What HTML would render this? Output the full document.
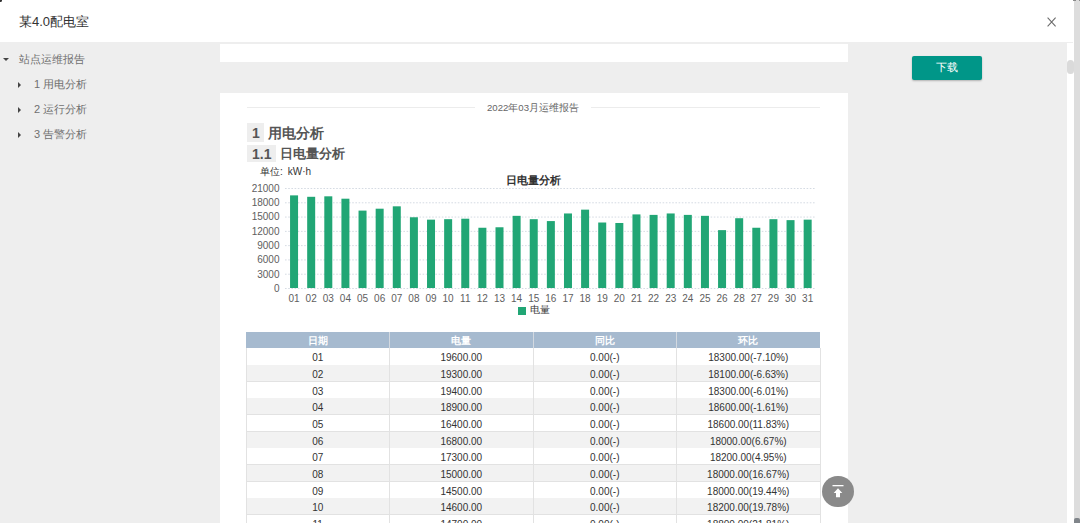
<!DOCTYPE html>
<html><head><meta charset="utf-8">
<style>
*{margin:0;padding:0;box-sizing:border-box}
html,body{width:1080px;height:523px;overflow:hidden;background:#fff;font-family:"Liberation Sans",sans-serif;color:#333}
.abs{position:absolute}
#hdr{left:0;top:0;width:1073px;height:43px;background:#fff;border-bottom:1px solid #eee}
#title{left:19px;top:13px;font-size:13px;line-height:17px;color:#333;white-space:nowrap}
#side{left:0;top:43px;width:220px;height:480px;background:#eee}
.si{font-size:11px;line-height:14px;color:#707070;white-space:nowrap}
.caret-d{width:0;height:0;border-left:3px solid transparent;border-right:3px solid transparent;border-top:3px solid #444}
.caret-r{width:0;height:0;border-top:3px solid transparent;border-bottom:3px solid transparent;border-left:3px solid #444}
#main{left:220px;top:43px;width:628px;height:480px;background:#eee}
#rightbg{left:848px;top:43px;width:219px;height:480px;background:#eee}
#track{left:1067px;top:43px;width:7px;height:480px;background:#fff}
#thumb{left:1067px;top:60px;width:7px;height:13.6px;background:#dadada;border-radius:3.5px}
#ostrip{left:1074px;top:0;width:6px;height:523px;background:#dddddd}
#btn{left:912px;top:56px;width:70px;height:24px;background:#009688;border-radius:2px;box-shadow:0 1px 2px rgba(0,0,0,.25);color:#fff;font-size:10.5px;line-height:22px;text-align:center}
.panel{background:#fff}
.hbox{background:#eee}
.h1{font-size:14px;line-height:18px;font-weight:bold;color:#555;white-space:nowrap}
.ax{font-family:"Liberation Sans",sans-serif;font-size:10px;fill:#606060}
.thx{color:#fff;font-weight:bold;font-size:9.5px;line-height:18px;text-align:center}
.tdx{color:#333;font-size:10px;line-height:20px;text-align:center;white-space:nowrap}
</style></head>
<body>
<div id="hdr" class="abs"></div>
<div id="title" class="abs">某4.0配电室</div>
<svg class="abs" style="left:1046px;top:16px" width="12" height="12" viewBox="0 0 12 12"><path d="M1.6 1.6L9.6 10.4M9.6 1.6L1.6 10.4" stroke="#6a6a6a" stroke-width="1.05"/></svg>

<div id="side" class="abs"></div>
<div class="abs caret-d" style="left:2.5px;top:57.5px"></div>
<div class="abs si" style="left:19px;top:52px">站点运维报告</div>
<div class="abs caret-r" style="left:18px;top:81.5px"></div>
<div class="abs si" style="left:34px;top:77px">1 用电分析</div>
<div class="abs caret-r" style="left:18px;top:106.5px"></div>
<div class="abs si" style="left:34px;top:102px">2 运行分析</div>
<div class="abs caret-r" style="left:18px;top:131.5px"></div>
<div class="abs si" style="left:34px;top:127px">3 告警分析</div>

<div id="main" class="abs"></div>
<div class="abs panel" style="left:220px;top:44px;width:627.5px;height:17.5px"></div>
<div class="abs panel" style="left:220px;top:93px;width:627.5px;height:430px"></div>

<div id="rightbg" class="abs"></div>
<div id="btn" class="abs">下载</div>
<div id="track" class="abs"></div>
<div id="thumb" class="abs"></div>
<div id="ostrip" class="abs"></div>
<div class="abs" style="left:1074px;top:518px;width:6px;height:5px;background:#80858a;border-radius:2px 2px 0 0"></div>
<div class="abs" style="left:1073px;top:0;width:3px;height:1px;background:#8a8a8a"></div>
<div class="abs" style="left:1078.5px;top:0;width:1.5px;height:1px;background:#8a8a8a"></div>
<div class="abs" style="left:-1px;top:-1px;width:3px;height:3px;border-radius:50%;background:#333"></div>

<div class="abs" style="left:247px;top:107px;width:228px;height:1px;background:#ececec"></div>
<div class="abs" style="left:591px;top:107px;width:229px;height:1px;background:#ececec"></div>
<div class="abs" style="left:475px;top:101px;width:116px;text-align:center;font-size:9.6px;line-height:13px;color:#666">2022年03月运维报告</div>

<div class="abs hbox" style="left:247px;top:123px;width:17px;height:19px"></div>
<div class="abs h1" style="left:252px;top:124px">1</div>
<div class="abs h1" style="left:268px;top:124px">用电分析</div>
<div class="abs hbox" style="left:247px;top:145px;width:29px;height:17px"></div>
<div class="abs h1" style="left:252px;top:145px">1.1</div>
<div class="abs h1" style="left:280px;top:145px;font-size:13.2px">日电量分析</div>
<div class="abs" style="left:260px;top:164.5px;font-size:10px;line-height:13px;color:#333;white-space:nowrap">单位:<span style="margin-left:5px">kW·h</span></div>
<div class="abs" style="left:473px;top:173px;width:121px;text-align:center;font-size:11px;line-height:14px;font-weight:bold;color:#333">日电量分析</div>
<svg class="abs" style="left:0;top:0" width="1080" height="523" viewBox="0 0 1080 523">
<line x1="285" y1="288.50" x2="815" y2="288.50" stroke="#d5dbe3" stroke-width="1" stroke-dasharray="1.6,1.6"/>
<line x1="285" y1="274.21" x2="815" y2="274.21" stroke="#d5dbe3" stroke-width="1" stroke-dasharray="1.6,1.6"/>
<line x1="285" y1="259.93" x2="815" y2="259.93" stroke="#d5dbe3" stroke-width="1" stroke-dasharray="1.6,1.6"/>
<line x1="285" y1="245.64" x2="815" y2="245.64" stroke="#d5dbe3" stroke-width="1" stroke-dasharray="1.6,1.6"/>
<line x1="285" y1="231.36" x2="815" y2="231.36" stroke="#d5dbe3" stroke-width="1" stroke-dasharray="1.6,1.6"/>
<line x1="285" y1="217.07" x2="815" y2="217.07" stroke="#d5dbe3" stroke-width="1" stroke-dasharray="1.6,1.6"/>
<line x1="285" y1="202.79" x2="815" y2="202.79" stroke="#d5dbe3" stroke-width="1" stroke-dasharray="1.6,1.6"/>
<line x1="285" y1="188.50" x2="815" y2="188.50" stroke="#d5dbe3" stroke-width="1" stroke-dasharray="1.6,1.6"/>
<text x="279.5" y="291.90" text-anchor="end" class="ax">0</text>
<text x="279.5" y="277.61" text-anchor="end" class="ax">3000</text>
<text x="279.5" y="263.33" text-anchor="end" class="ax">6000</text>
<text x="279.5" y="249.04" text-anchor="end" class="ax">9000</text>
<text x="279.5" y="234.76" text-anchor="end" class="ax">12000</text>
<text x="279.5" y="220.47" text-anchor="end" class="ax">15000</text>
<text x="279.5" y="206.19" text-anchor="end" class="ax">18000</text>
<text x="279.5" y="191.90" text-anchor="end" class="ax">21000</text>
<rect x="290.06" y="195.37" width="8" height="92.63" fill="#21a675"/>
<text x="294.06" y="302" text-anchor="middle" class="ax">01</text>
<rect x="307.18" y="196.80" width="8" height="91.20" fill="#21a675"/>
<text x="311.18" y="302" text-anchor="middle" class="ax">02</text>
<rect x="324.30" y="196.32" width="8" height="91.68" fill="#21a675"/>
<text x="328.30" y="302" text-anchor="middle" class="ax">03</text>
<rect x="341.42" y="198.70" width="8" height="89.30" fill="#21a675"/>
<text x="345.42" y="302" text-anchor="middle" class="ax">04</text>
<rect x="358.54" y="210.60" width="8" height="77.40" fill="#21a675"/>
<text x="362.54" y="302" text-anchor="middle" class="ax">05</text>
<rect x="375.66" y="208.70" width="8" height="79.30" fill="#21a675"/>
<text x="379.66" y="302" text-anchor="middle" class="ax">06</text>
<rect x="392.78" y="206.32" width="8" height="81.68" fill="#21a675"/>
<text x="396.78" y="302" text-anchor="middle" class="ax">07</text>
<rect x="409.90" y="217.27" width="8" height="70.73" fill="#21a675"/>
<text x="413.90" y="302" text-anchor="middle" class="ax">08</text>
<rect x="427.02" y="219.65" width="8" height="68.35" fill="#21a675"/>
<text x="431.02" y="302" text-anchor="middle" class="ax">09</text>
<rect x="444.14" y="219.18" width="8" height="68.82" fill="#21a675"/>
<text x="448.14" y="302" text-anchor="middle" class="ax">10</text>
<rect x="461.26" y="218.70" width="8" height="69.30" fill="#21a675"/>
<text x="465.26" y="302" text-anchor="middle" class="ax">11</text>
<rect x="478.38" y="227.75" width="8" height="60.25" fill="#21a675"/>
<text x="482.38" y="302" text-anchor="middle" class="ax">12</text>
<rect x="495.50" y="227.27" width="8" height="60.73" fill="#21a675"/>
<text x="499.50" y="302" text-anchor="middle" class="ax">13</text>
<rect x="512.62" y="215.84" width="8" height="72.16" fill="#21a675"/>
<text x="516.62" y="302" text-anchor="middle" class="ax">14</text>
<rect x="529.74" y="219.18" width="8" height="68.82" fill="#21a675"/>
<text x="533.74" y="302" text-anchor="middle" class="ax">15</text>
<rect x="546.86" y="221.08" width="8" height="66.92" fill="#21a675"/>
<text x="550.86" y="302" text-anchor="middle" class="ax">16</text>
<rect x="563.98" y="213.46" width="8" height="74.54" fill="#21a675"/>
<text x="567.98" y="302" text-anchor="middle" class="ax">17</text>
<rect x="581.10" y="209.65" width="8" height="78.35" fill="#21a675"/>
<text x="585.10" y="302" text-anchor="middle" class="ax">18</text>
<rect x="598.22" y="222.51" width="8" height="65.49" fill="#21a675"/>
<text x="602.22" y="302" text-anchor="middle" class="ax">19</text>
<rect x="615.34" y="222.99" width="8" height="65.01" fill="#21a675"/>
<text x="619.34" y="302" text-anchor="middle" class="ax">20</text>
<rect x="632.46" y="214.41" width="8" height="73.59" fill="#21a675"/>
<text x="636.46" y="302" text-anchor="middle" class="ax">21</text>
<rect x="649.58" y="214.89" width="8" height="73.11" fill="#21a675"/>
<text x="653.58" y="302" text-anchor="middle" class="ax">22</text>
<rect x="666.70" y="213.46" width="8" height="74.54" fill="#21a675"/>
<text x="670.70" y="302" text-anchor="middle" class="ax">23</text>
<rect x="683.82" y="214.89" width="8" height="73.11" fill="#21a675"/>
<text x="687.82" y="302" text-anchor="middle" class="ax">24</text>
<rect x="700.94" y="215.84" width="8" height="72.16" fill="#21a675"/>
<text x="704.94" y="302" text-anchor="middle" class="ax">25</text>
<rect x="718.06" y="230.13" width="8" height="57.87" fill="#21a675"/>
<text x="722.06" y="302" text-anchor="middle" class="ax">26</text>
<rect x="735.18" y="218.22" width="8" height="69.78" fill="#21a675"/>
<text x="739.18" y="302" text-anchor="middle" class="ax">28</text>
<rect x="752.30" y="227.75" width="8" height="60.25" fill="#21a675"/>
<text x="756.30" y="302" text-anchor="middle" class="ax">27</text>
<rect x="769.42" y="219.18" width="8" height="68.82" fill="#21a675"/>
<text x="773.42" y="302" text-anchor="middle" class="ax">29</text>
<rect x="786.54" y="220.13" width="8" height="67.87" fill="#21a675"/>
<text x="790.54" y="302" text-anchor="middle" class="ax">30</text>
<rect x="803.66" y="219.65" width="8" height="68.35" fill="#21a675"/>
<text x="807.66" y="302" text-anchor="middle" class="ax">31</text>
</svg>
<div class="abs" style="left:518px;top:307px;width:8px;height:8px;background:#21a675"></div>
<div class="abs" style="left:530px;top:303px;font-size:10px;line-height:13px;color:#333;white-space:nowrap">电量</div>
<div class="abs" style="left:246px;top:332px;width:574px;height:16.4px;background:#a6bacf"></div>
<div class="abs thx" style="left:246px;top:332px;width:143.5px;height:16.4px">日期</div>
<div class="abs thx" style="left:389.5px;top:332px;width:143.5px;height:16.4px">电量</div>
<div class="abs thx" style="left:533px;top:332px;width:143.5px;height:16.4px">同比</div>
<div class="abs thx" style="left:676.5px;top:332px;width:143.5px;height:16.4px">环比</div>
<div class="abs" style="left:389.0px;top:332px;width:1px;height:16.4px;background:#d3d9e0"></div>
<div class="abs" style="left:532.5px;top:332px;width:1px;height:16.4px;background:#d3d9e0"></div>
<div class="abs" style="left:676.0px;top:332px;width:1px;height:16.4px;background:#d3d9e0"></div>
<div class="abs" style="left:246px;top:348.40px;width:574px;height:16.64px;background:#fff"></div>
<div class="abs" style="left:246px;top:364.54px;width:574px;height:1px;background:#e2e2e2"></div>
<div class="abs tdx" style="left:246px;top:348.40px;width:143.5px;height:16.64px">01</div>
<div class="abs tdx" style="left:389.5px;top:348.40px;width:143.5px;height:16.64px">19600.00</div>
<div class="abs tdx" style="left:533px;top:348.40px;width:143.5px;height:16.64px">0.00(-)</div>
<div class="abs tdx" style="left:676.5px;top:348.40px;width:143.5px;height:16.64px">18300.00(-7.10%)</div>
<div class="abs" style="left:246px;top:365.04px;width:574px;height:16.64px;background:#f2f2f2"></div>
<div class="abs" style="left:246px;top:381.18px;width:574px;height:1px;background:#e2e2e2"></div>
<div class="abs tdx" style="left:246px;top:365.04px;width:143.5px;height:16.64px">02</div>
<div class="abs tdx" style="left:389.5px;top:365.04px;width:143.5px;height:16.64px">19300.00</div>
<div class="abs tdx" style="left:533px;top:365.04px;width:143.5px;height:16.64px">0.00(-)</div>
<div class="abs tdx" style="left:676.5px;top:365.04px;width:143.5px;height:16.64px">18100.00(-6.63%)</div>
<div class="abs" style="left:246px;top:381.68px;width:574px;height:16.64px;background:#fff"></div>
<div class="abs" style="left:246px;top:397.82px;width:574px;height:1px;background:#e2e2e2"></div>
<div class="abs tdx" style="left:246px;top:381.68px;width:143.5px;height:16.64px">03</div>
<div class="abs tdx" style="left:389.5px;top:381.68px;width:143.5px;height:16.64px">19400.00</div>
<div class="abs tdx" style="left:533px;top:381.68px;width:143.5px;height:16.64px">0.00(-)</div>
<div class="abs tdx" style="left:676.5px;top:381.68px;width:143.5px;height:16.64px">18300.00(-6.01%)</div>
<div class="abs" style="left:246px;top:398.32px;width:574px;height:16.64px;background:#f2f2f2"></div>
<div class="abs" style="left:246px;top:414.46px;width:574px;height:1px;background:#e2e2e2"></div>
<div class="abs tdx" style="left:246px;top:398.32px;width:143.5px;height:16.64px">04</div>
<div class="abs tdx" style="left:389.5px;top:398.32px;width:143.5px;height:16.64px">18900.00</div>
<div class="abs tdx" style="left:533px;top:398.32px;width:143.5px;height:16.64px">0.00(-)</div>
<div class="abs tdx" style="left:676.5px;top:398.32px;width:143.5px;height:16.64px">18600.00(-1.61%)</div>
<div class="abs" style="left:246px;top:414.96px;width:574px;height:16.64px;background:#fff"></div>
<div class="abs" style="left:246px;top:431.10px;width:574px;height:1px;background:#e2e2e2"></div>
<div class="abs tdx" style="left:246px;top:414.96px;width:143.5px;height:16.64px">05</div>
<div class="abs tdx" style="left:389.5px;top:414.96px;width:143.5px;height:16.64px">16400.00</div>
<div class="abs tdx" style="left:533px;top:414.96px;width:143.5px;height:16.64px">0.00(-)</div>
<div class="abs tdx" style="left:676.5px;top:414.96px;width:143.5px;height:16.64px">18600.00(11.83%)</div>
<div class="abs" style="left:246px;top:431.60px;width:574px;height:16.64px;background:#f2f2f2"></div>
<div class="abs" style="left:246px;top:447.74px;width:574px;height:1px;background:#e2e2e2"></div>
<div class="abs tdx" style="left:246px;top:431.60px;width:143.5px;height:16.64px">06</div>
<div class="abs tdx" style="left:389.5px;top:431.60px;width:143.5px;height:16.64px">16800.00</div>
<div class="abs tdx" style="left:533px;top:431.60px;width:143.5px;height:16.64px">0.00(-)</div>
<div class="abs tdx" style="left:676.5px;top:431.60px;width:143.5px;height:16.64px">18000.00(6.67%)</div>
<div class="abs" style="left:246px;top:448.24px;width:574px;height:16.64px;background:#fff"></div>
<div class="abs" style="left:246px;top:464.38px;width:574px;height:1px;background:#e2e2e2"></div>
<div class="abs tdx" style="left:246px;top:448.24px;width:143.5px;height:16.64px">07</div>
<div class="abs tdx" style="left:389.5px;top:448.24px;width:143.5px;height:16.64px">17300.00</div>
<div class="abs tdx" style="left:533px;top:448.24px;width:143.5px;height:16.64px">0.00(-)</div>
<div class="abs tdx" style="left:676.5px;top:448.24px;width:143.5px;height:16.64px">18200.00(4.95%)</div>
<div class="abs" style="left:246px;top:464.88px;width:574px;height:16.64px;background:#f2f2f2"></div>
<div class="abs" style="left:246px;top:481.02px;width:574px;height:1px;background:#e2e2e2"></div>
<div class="abs tdx" style="left:246px;top:464.88px;width:143.5px;height:16.64px">08</div>
<div class="abs tdx" style="left:389.5px;top:464.88px;width:143.5px;height:16.64px">15000.00</div>
<div class="abs tdx" style="left:533px;top:464.88px;width:143.5px;height:16.64px">0.00(-)</div>
<div class="abs tdx" style="left:676.5px;top:464.88px;width:143.5px;height:16.64px">18000.00(16.67%)</div>
<div class="abs" style="left:246px;top:481.52px;width:574px;height:16.64px;background:#fff"></div>
<div class="abs" style="left:246px;top:497.66px;width:574px;height:1px;background:#e2e2e2"></div>
<div class="abs tdx" style="left:246px;top:481.52px;width:143.5px;height:16.64px">09</div>
<div class="abs tdx" style="left:389.5px;top:481.52px;width:143.5px;height:16.64px">14500.00</div>
<div class="abs tdx" style="left:533px;top:481.52px;width:143.5px;height:16.64px">0.00(-)</div>
<div class="abs tdx" style="left:676.5px;top:481.52px;width:143.5px;height:16.64px">18000.00(19.44%)</div>
<div class="abs" style="left:246px;top:498.16px;width:574px;height:16.64px;background:#f2f2f2"></div>
<div class="abs" style="left:246px;top:514.30px;width:574px;height:1px;background:#e2e2e2"></div>
<div class="abs tdx" style="left:246px;top:498.16px;width:143.5px;height:16.64px">10</div>
<div class="abs tdx" style="left:389.5px;top:498.16px;width:143.5px;height:16.64px">14600.00</div>
<div class="abs tdx" style="left:533px;top:498.16px;width:143.5px;height:16.64px">0.00(-)</div>
<div class="abs tdx" style="left:676.5px;top:498.16px;width:143.5px;height:16.64px">18200.00(19.78%)</div>
<div class="abs" style="left:246px;top:514.80px;width:574px;height:16.64px;background:#fff"></div>
<div class="abs" style="left:246px;top:530.94px;width:574px;height:1px;background:#e2e2e2"></div>
<div class="abs tdx" style="left:246px;top:514.80px;width:143.5px;height:16.64px">11</div>
<div class="abs tdx" style="left:389.5px;top:514.80px;width:143.5px;height:16.64px">14700.00</div>
<div class="abs tdx" style="left:533px;top:514.80px;width:143.5px;height:16.64px">0.00(-)</div>
<div class="abs tdx" style="left:676.5px;top:514.80px;width:143.5px;height:16.64px">18800.00(21.81%)</div>
<div class="abs" style="left:246px;top:531.44px;width:574px;height:16.64px;background:#f2f2f2"></div>
<div class="abs" style="left:246px;top:547.58px;width:574px;height:1px;background:#e2e2e2"></div>
<div class="abs tdx" style="left:246px;top:531.44px;width:143.5px;height:16.64px">12</div>
<div class="abs tdx" style="left:389.5px;top:531.44px;width:143.5px;height:16.64px">12800.00</div>
<div class="abs tdx" style="left:533px;top:531.44px;width:143.5px;height:16.64px">0.00(-)</div>
<div class="abs tdx" style="left:676.5px;top:531.44px;width:143.5px;height:16.64px">18300.00(-30.05%)</div>
<div class="abs" style="left:245.5px;top:348.4px;width:1px;height:174.60000000000002px;background:#e2e2e2"></div>
<div class="abs" style="left:389.0px;top:348.4px;width:1px;height:174.60000000000002px;background:#e2e2e2"></div>
<div class="abs" style="left:532.5px;top:348.4px;width:1px;height:174.60000000000002px;background:#e2e2e2"></div>
<div class="abs" style="left:676.0px;top:348.4px;width:1px;height:174.60000000000002px;background:#e2e2e2"></div>
<div class="abs" style="left:819.5px;top:348.4px;width:1px;height:174.60000000000002px;background:#e2e2e2"></div>
<div class="abs" style="left:822.2px;top:475.5px;width:31.6px;height:31.6px;border-radius:50%;background:#8a8a8a"></div>
<svg class="abs" style="left:822px;top:475.3px" width="32" height="32" viewBox="0 0 32 32"><rect x="10.5" y="10" width="11" height="1.3" fill="#fff"/><path d="M16 13.3L20.3 18H18V22.2H14V18H11.7Z" fill="#fff"/></svg>
</body></html>
